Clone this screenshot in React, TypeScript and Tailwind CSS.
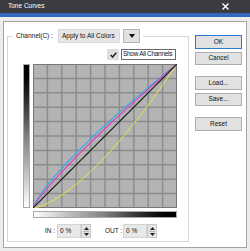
const curve = (g: number) => {
  const pts: string[] = []
  for (let i = 0; i <= 40; i++) {
    const x = i / 40
    pts.push(`${(x * 144).toFixed(2)},${(144 - Math.pow(x, g) * 144).toFixed(2)}`)
  }
  return pts.join(' ')
}

const Spinner = () => (
  <div className="w-[10px] h-[14px] bg-[#e3e3e3] border border-[#c8c8c8] flex flex-col items-center justify-center gap-[1px]">
    <svg width="5" height="3" viewBox="0 0 5 3"><path d="M0 3 L2.5 0 L5 3 Z" fill="#222" /></svg>
    <div className="w-[6px] h-px bg-[#b8b8b8]" />
    <svg width="5" height="3" viewBox="0 0 5 3"><path d="M0 0 L2.5 3 L5 0 Z" fill="#222" /></svg>
  </div>
)

const Btn = ({ label, primary, className }: { label: string; primary?: boolean; className?: string }) => (
  <div
    className={`w-[47px] flex items-center justify-center bg-[#e1e1e1] border ${
      primary ? 'border-[#2a7ad8]' : 'border-[#adadad]'
    } ${className ?? ''}`}
  >
    {label}
  </div>
)

export default function App() {
  const lines = [1, 2, 3, 4, 5, 6, 7, 8, 9].map((i) => i * 14.4)
  return (
    <div className="w-[250px] h-[251px] bg-[#ececec] flex flex-col font-['Liberation_Sans',Arial,sans-serif] text-[6.5px] leading-none text-[#111] overflow-hidden">
      {/* title bar */}
      <div className="h-[13px] bg-[#3a3c41] flex items-center justify-between pl-[8px] pr-[21px] text-white">
        <span>Tone Curves</span>
        <svg width="7" height="7" viewBox="0 0 7 7">
          <path d="M0.5 0.5 L6.5 6.5 M6.5 0.5 L0.5 6.5" stroke="#fff" strokeWidth="1.4" />
        </svg>
      </div>
      <div className="h-[4px] bg-[#3468c0]" />

      <div className="flex-1 px-[3px] pt-[4px] pb-[3px] flex">
        <div className="flex-1 bg-white border border-[#a4a4a4] flex items-start pl-[3px] pt-[7px]">
          <fieldset className="w-[182px] border border-[#d6d6d6]">
            <legend className="ml-[5px] px-[3px] flex items-center">
              <span className="w-[42px]">Channel(C) :</span>
              <div className="w-[62px] h-[14px] bg-[#e5e5e5] border border-[#d8d8d8] flex items-center pl-[3px]">
                Apply to All Colors
              </div>
              <div className="ml-[3px] w-[17px] h-[14px] bg-[#e1e1e1] border border-[#b4b4b4] flex items-center justify-center">
                <svg width="6" height="4" viewBox="0 0 6 4"><path d="M0 0 L3 4 L6 0 Z" fill="#111" /></svg>
              </div>
            </legend>

            <div className="pl-[15px] pr-[11px] pb-[3px]">
              <div className="mt-[6px] h-[11px] flex justify-end pr-[1px]">
                <div className="w-[12px] h-[11px] bg-[#dedede] flex items-center justify-center">
                  <svg width="7" height="6" viewBox="0 0 7 6">
                    <path d="M0.7 3 L2.6 5 L6.3 0.8" stroke="#111" strokeWidth="1.3" fill="none" />
                  </svg>
                </div>
                <div className="ml-[2px] w-[55px] h-[11px] border border-[#6a6a6a] bg-white flex items-center pl-px overflow-hidden whitespace-nowrap tracking-[-0.3px]">
                  Show All Channels
                </div>
              </div>

              <div className="mt-[4px] flex gap-[3px]">
                <div className="w-[7px] h-[144px] border border-[#a8a8a8] bg-gradient-to-b from-black via-[#808080] to-white" />
                <svg width="144" height="144" viewBox="0 0 144 144">
                  <rect x="0" y="0" width="144" height="144" fill="#b3b3b3" />
                  {lines.map((p) => (
                    <g key={p}>
                      <line x1={p} y1="0" x2={p} y2="144" stroke="#8c8c8c" strokeWidth="1.5" />
                      <line x1="0" y1={p} x2="144" y2={p} stroke="#8c8c8c" strokeWidth="1.5" />
                    </g>
                  ))}
                  <rect x="0.5" y="0.5" width="143" height="143" fill="none" stroke="#777" strokeWidth="1" />
                  <polyline points={curve(1.5)} fill="none" stroke="#e8e448" strokeWidth="1" />
                  <polyline points={curve(0.8)} fill="none" stroke="#3aa8e4" strokeWidth="1.1" />
                  <polyline points={curve(0.86)} fill="none" stroke="#de3cc6" strokeWidth="1.1" />
                  <polyline points={curve(1)} fill="none" stroke="#1c1c1c" strokeWidth="1.2" />
                </svg>
              </div>

              <div className="ml-[10px] mt-[3px] w-[144px] h-[7px] border border-[#a8a8a8] bg-gradient-to-r from-white via-[#808080] to-black" />

              <div className="mt-[6px] h-[14px] flex items-center pl-[22px]">
                <span className="w-[12px]">IN :</span>
                <div className="w-[24px] h-[14px] bg-[#e8e8e8] border border-[#d4d4d4] flex items-center pl-[2px]">0 %</div>
                <Spinner />
                <span className="ml-[14px] w-[18px]">OUT :</span>
                <div className="w-[24px] h-[14px] bg-[#e8e8e8] border border-[#d4d4d4] flex items-center pl-[2px]">0 %</div>
                <Spinner />
              </div>
            </div>
          </fieldset>

          <div className="ml-[6px] mt-[6px] flex flex-col">
            <Btn label="OK" primary className="h-[14px]" />
            <Btn label="Cancel" className="h-[13px] mt-[3px]" />
            <Btn label="Load..." className="h-[14px] mt-[11px]" />
            <Btn label="Save..." className="h-[13px] mt-[3px]" />
            <Btn label="Reset" className="h-[14px] mt-[11px]" />
          </div>
        </div>
      </div>
    </div>
  )
}
